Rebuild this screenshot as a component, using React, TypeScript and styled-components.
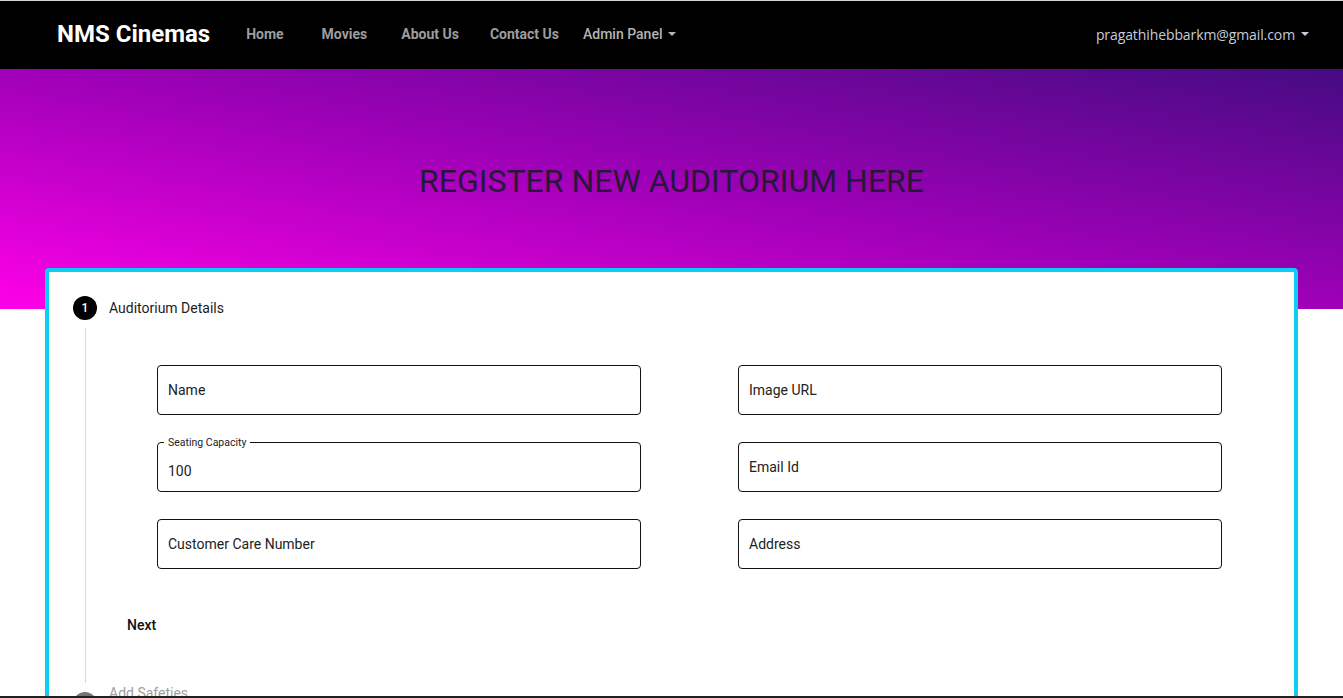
import React from "react";
import styled, { createGlobalStyle } from "styled-components";

const Global = createGlobalStyle`
  html, body { margin: 0; padding: 0; background: #fff; }
  body { font-family: Roboto, "Noto Sans", Arial, sans-serif; overflow: hidden; }
  * { box-sizing: border-box; }
`;

const Page = styled.div`
  width: 1343px;
  height: 698px;
  overflow: hidden;
  position: relative;
`;

const Nav = styled.nav`
  height: 69px;
  background: #000;
  border-top: 1px solid #d4d4d4;
  display: flex;
  align-items: center;
  padding: 0 34px 2px 57px;
`;

const Brand = styled.a`
  font-family: Roboto, sans-serif;
  font-weight: 700;
  font-size: 24px;
  color: #fff;
`;

const NavLink = styled.a<{ $ml: number; $light?: boolean }>`
  margin-left: ${(p) => p.$ml}px;
  font-family: Roboto, sans-serif;
  font-size: 14px;
  font-weight: ${(p) => (p.$light ? 500 : 700)};
  color: ${(p) => (p.$light ? "#b4b4b4" : "#9d9d9d")};
  display: flex;
  align-items: center;
`;

const Caret = styled.span<{ $color: string }>`
  display: inline-block;
  margin-left: 6px;
  width: 0;
  height: 0;
  border-top: 4.5px solid ${(p) => p.$color};
  border-left: 4.5px solid transparent;
  border-right: 4.5px solid transparent;
`;

const Spacer = styled.div`
  flex: 1;
`;

const UserMenu = styled.a`
  font-family: "Open Sans", sans-serif;
  font-size: 14px;
  letter-spacing: -0.1px;
  color: #c5cddb;
  display: flex;
  align-items: center;
`;

const Hero = styled.header`
  height: 240px;
  background: linear-gradient(to top right, #ff00e8 0%, #a000b8 50%, #450b82 100%);
  display: flex;
  justify-content: center;
  padding-top: 92px;
`;

const Title = styled.h1`
  margin: 0;
  font-family: Roboto, sans-serif;
  font-weight: 400;
  font-size: 32px;
  line-height: 40px;
  color: rgba(28, 26, 44, 0.92);
`;

const Card = styled.section`
  margin: -41px 45px 0;
  background: #fff;
  border: 4px solid #0ecdf3;
  border-radius: 4px;
  padding: 24px 24px 0;
  position: relative;
  height: 520px;
`;

const StepHead = styled.div`
  display: flex;
  align-items: center;
  height: 24px;
`;

const StepIcon = styled.span<{ $active?: boolean }>`
  width: 24px;
  height: 24px;
  border-radius: 50%;
  background: ${(p) => (p.$active ? "#000" : "#757575")};
  color: #fff;
  font-size: 12px;
  font-weight: 500;
  display: flex;
  align-items: center;
  justify-content: center;
  flex-shrink: 0;
`;

const StepLabel = styled.span<{ $active?: boolean }>`
  margin-left: 12px;
  font-size: 14px;
  color: ${(p) => (p.$active ? "#1c1c1c" : "#9e9e9e")};
  font-weight: 400;
`;

const NextStep = styled(StepHead)`
  margin-top: 9px;
  align-items: flex-start;
  & > ${StepLabel} {
    margin-top: -7px;
  }
`;

const StepBody = styled.div`
  margin: 8px 0 0 12px;
  border-left: 1px solid #d9d9d9;
  padding: 37px 0 40px 0;
`;

const FieldGrid = styled.div`
  display: grid;
  grid-template-columns: 1fr 1fr;
  column-gap: 97px;
  row-gap: 27px;
  padding: 0 48px 0 71px;
`;

const Field = styled.div`
  height: 50px;
  border: 1px solid #111;
  border-radius: 4px;
  display: flex;
  align-items: center;
  padding: 0 10px;
  font-size: 14px;
  color: #222;
  position: relative;
`;

const FilledValue = styled.span`
  padding-top: 8px;
`;

const FloatLabel = styled.span`
  position: absolute;
  left: 6px;
  top: -6px;
  padding: 0 4px;
  background: #fff;
  font-size: 10.5px;
  line-height: 12px;
  color: #222;
`;

const Actions = styled.div`
  margin-top: 38px;
  padding-left: 33px;
`;

const TextButton = styled.button`
  height: 36px;
  padding: 0 8px;
  border: none;
  background: transparent;
  font-family: Roboto, sans-serif;
  font-size: 14px;
  font-weight: 500;
  color: #111;
  cursor: pointer;
`;

const BottomEdge = styled.div`
  position: absolute;
  left: 0;
  right: 0;
  bottom: 0;
  height: 2px;
  background: #202020;
`;

const fields: { label: string; value?: string }[] = [
  { label: "Name" },
  { label: "Image URL" },
  { label: "Seating Capacity", value: "100" },
  { label: "Email Id" },
  { label: "Customer Care Number" },
  { label: "Address" },
];

export default function App() {
  return (
    <Page>
      <Global />
      <Nav>
        <Brand>NMS Cinemas</Brand>
        <NavLink $ml={36}>Home</NavLink>
        <NavLink $ml={38}>Movies</NavLink>
        <NavLink $ml={34}>About Us</NavLink>
        <NavLink $ml={31}>Contact Us</NavLink>
        <NavLink $ml={24} $light>
          Admin Panel
          <Caret $color="#b4b4b4" />
        </NavLink>
        <Spacer />
        <UserMenu>
          pragathihebbarkm@gmail.com
          <Caret $color="#c5cddb" />
        </UserMenu>
      </Nav>
      <Hero>
        <Title>REGISTER NEW AUDITORIUM HERE</Title>
      </Hero>
      <Card>
        <StepHead>
          <StepIcon $active>1</StepIcon>
          <StepLabel $active>Auditorium Details</StepLabel>
        </StepHead>
        <StepBody>
          <FieldGrid>
            {fields.map((f) =>
              f.value ? (
                <Field key={f.label}>
                  <FloatLabel>{f.label}</FloatLabel>
                  <FilledValue>{f.value}</FilledValue>
                </Field>
              ) : (
                <Field key={f.label}>{f.label}</Field>
              )
            )}
          </FieldGrid>
          <Actions>
            <TextButton>Next</TextButton>
          </Actions>
        </StepBody>
        <NextStep>
          <StepIcon>2</StepIcon>
          <StepLabel>Add Safeties</StepLabel>
        </NextStep>
      </Card>
      <BottomEdge />
    </Page>
  );
}
